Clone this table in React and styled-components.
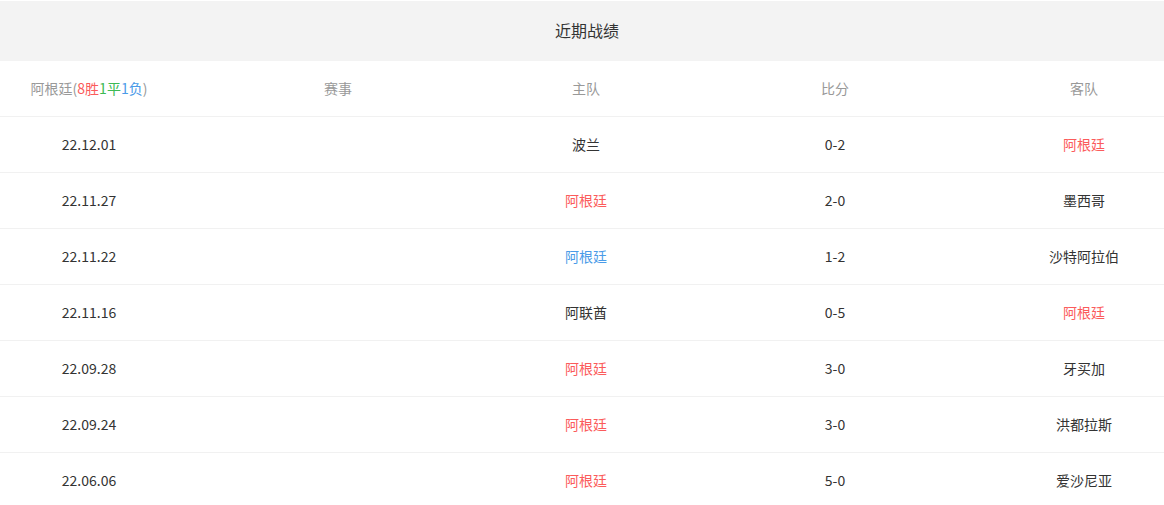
import React from "react";
import styled, { createGlobalStyle } from "styled-components";

const GlobalStyle = createGlobalStyle`
  html, body {
    margin: 0;
    padding: 0;
    background: #fff;
    overflow: hidden;
  }
  body {
    font-family: "Noto Sans CJK SC", "Noto Sans", sans-serif;
    font-size: 14px;
    color: #333;
  }
`;

const Panel = styled.section`
  width: 1174px;
  padding-top: 1px;
`;

const TitleBar = styled.div`
  height: 60px;
  padding-bottom: 2px;
  box-sizing: border-box;
  background: #f3f3f3;
  display: flex;
  align-items: center;
  justify-content: center;
  font-size: 16px;
  color: #333;
`;

const Row = styled.div`
  display: grid;
  grid-template-columns: 178px 320px 176px 322px 176px;
  height: 55px;
  align-items: center;
  border-bottom: 1px solid #f1f1f1;
  color: ${(p) => (p.$head ? "#999" : "#333")};
`;

const Cell = styled.div`
  text-align: center;
  white-space: nowrap;
  padding-bottom: 2px;
  color: ${(p) => p.$color || "inherit"};
`;

const Tone = styled.span`
  color: ${(p) => p.$color};
`;

const RED = "#fb5b5b";
const BLUE = "#4a9be8";
const GREEN = "#3cba54";

const matches = [
  { date: "22.12.01", home: "波兰", score: "0-2", away: "阿根廷", awayColor: RED },
  { date: "22.11.27", home: "阿根廷", homeColor: RED, score: "2-0", away: "墨西哥" },
  { date: "22.11.22", home: "阿根廷", homeColor: BLUE, score: "1-2", away: "沙特阿拉伯" },
  { date: "22.11.16", home: "阿联酋", score: "0-5", away: "阿根廷", awayColor: RED },
  { date: "22.09.28", home: "阿根廷", homeColor: RED, score: "3-0", away: "牙买加" },
  { date: "22.09.24", home: "阿根廷", homeColor: RED, score: "3-0", away: "洪都拉斯" },
  { date: "22.06.06", home: "阿根廷", homeColor: RED, score: "5-0", away: "爱沙尼亚" },
];

export default function App() {
  return (
    <>
      <GlobalStyle />
      <Panel>
        <TitleBar>近期战绩</TitleBar>
        <Row $head>
          <Cell>
            阿根廷(<Tone $color={RED}>8胜</Tone>
            <Tone $color={GREEN}>1平</Tone>
            <Tone $color={BLUE}>1负</Tone>)
          </Cell>
          <Cell>赛事</Cell>
          <Cell>主队</Cell>
          <Cell>比分</Cell>
          <Cell>客队</Cell>
        </Row>
        {matches.map((m) => (
          <Row key={m.date}>
            <Cell>{m.date}</Cell>
            <Cell />
            <Cell $color={m.homeColor}>{m.home}</Cell>
            <Cell>{m.score}</Cell>
            <Cell $color={m.awayColor}>{m.away}</Cell>
          </Row>
        ))}
      </Panel>
    </>
  );
}
